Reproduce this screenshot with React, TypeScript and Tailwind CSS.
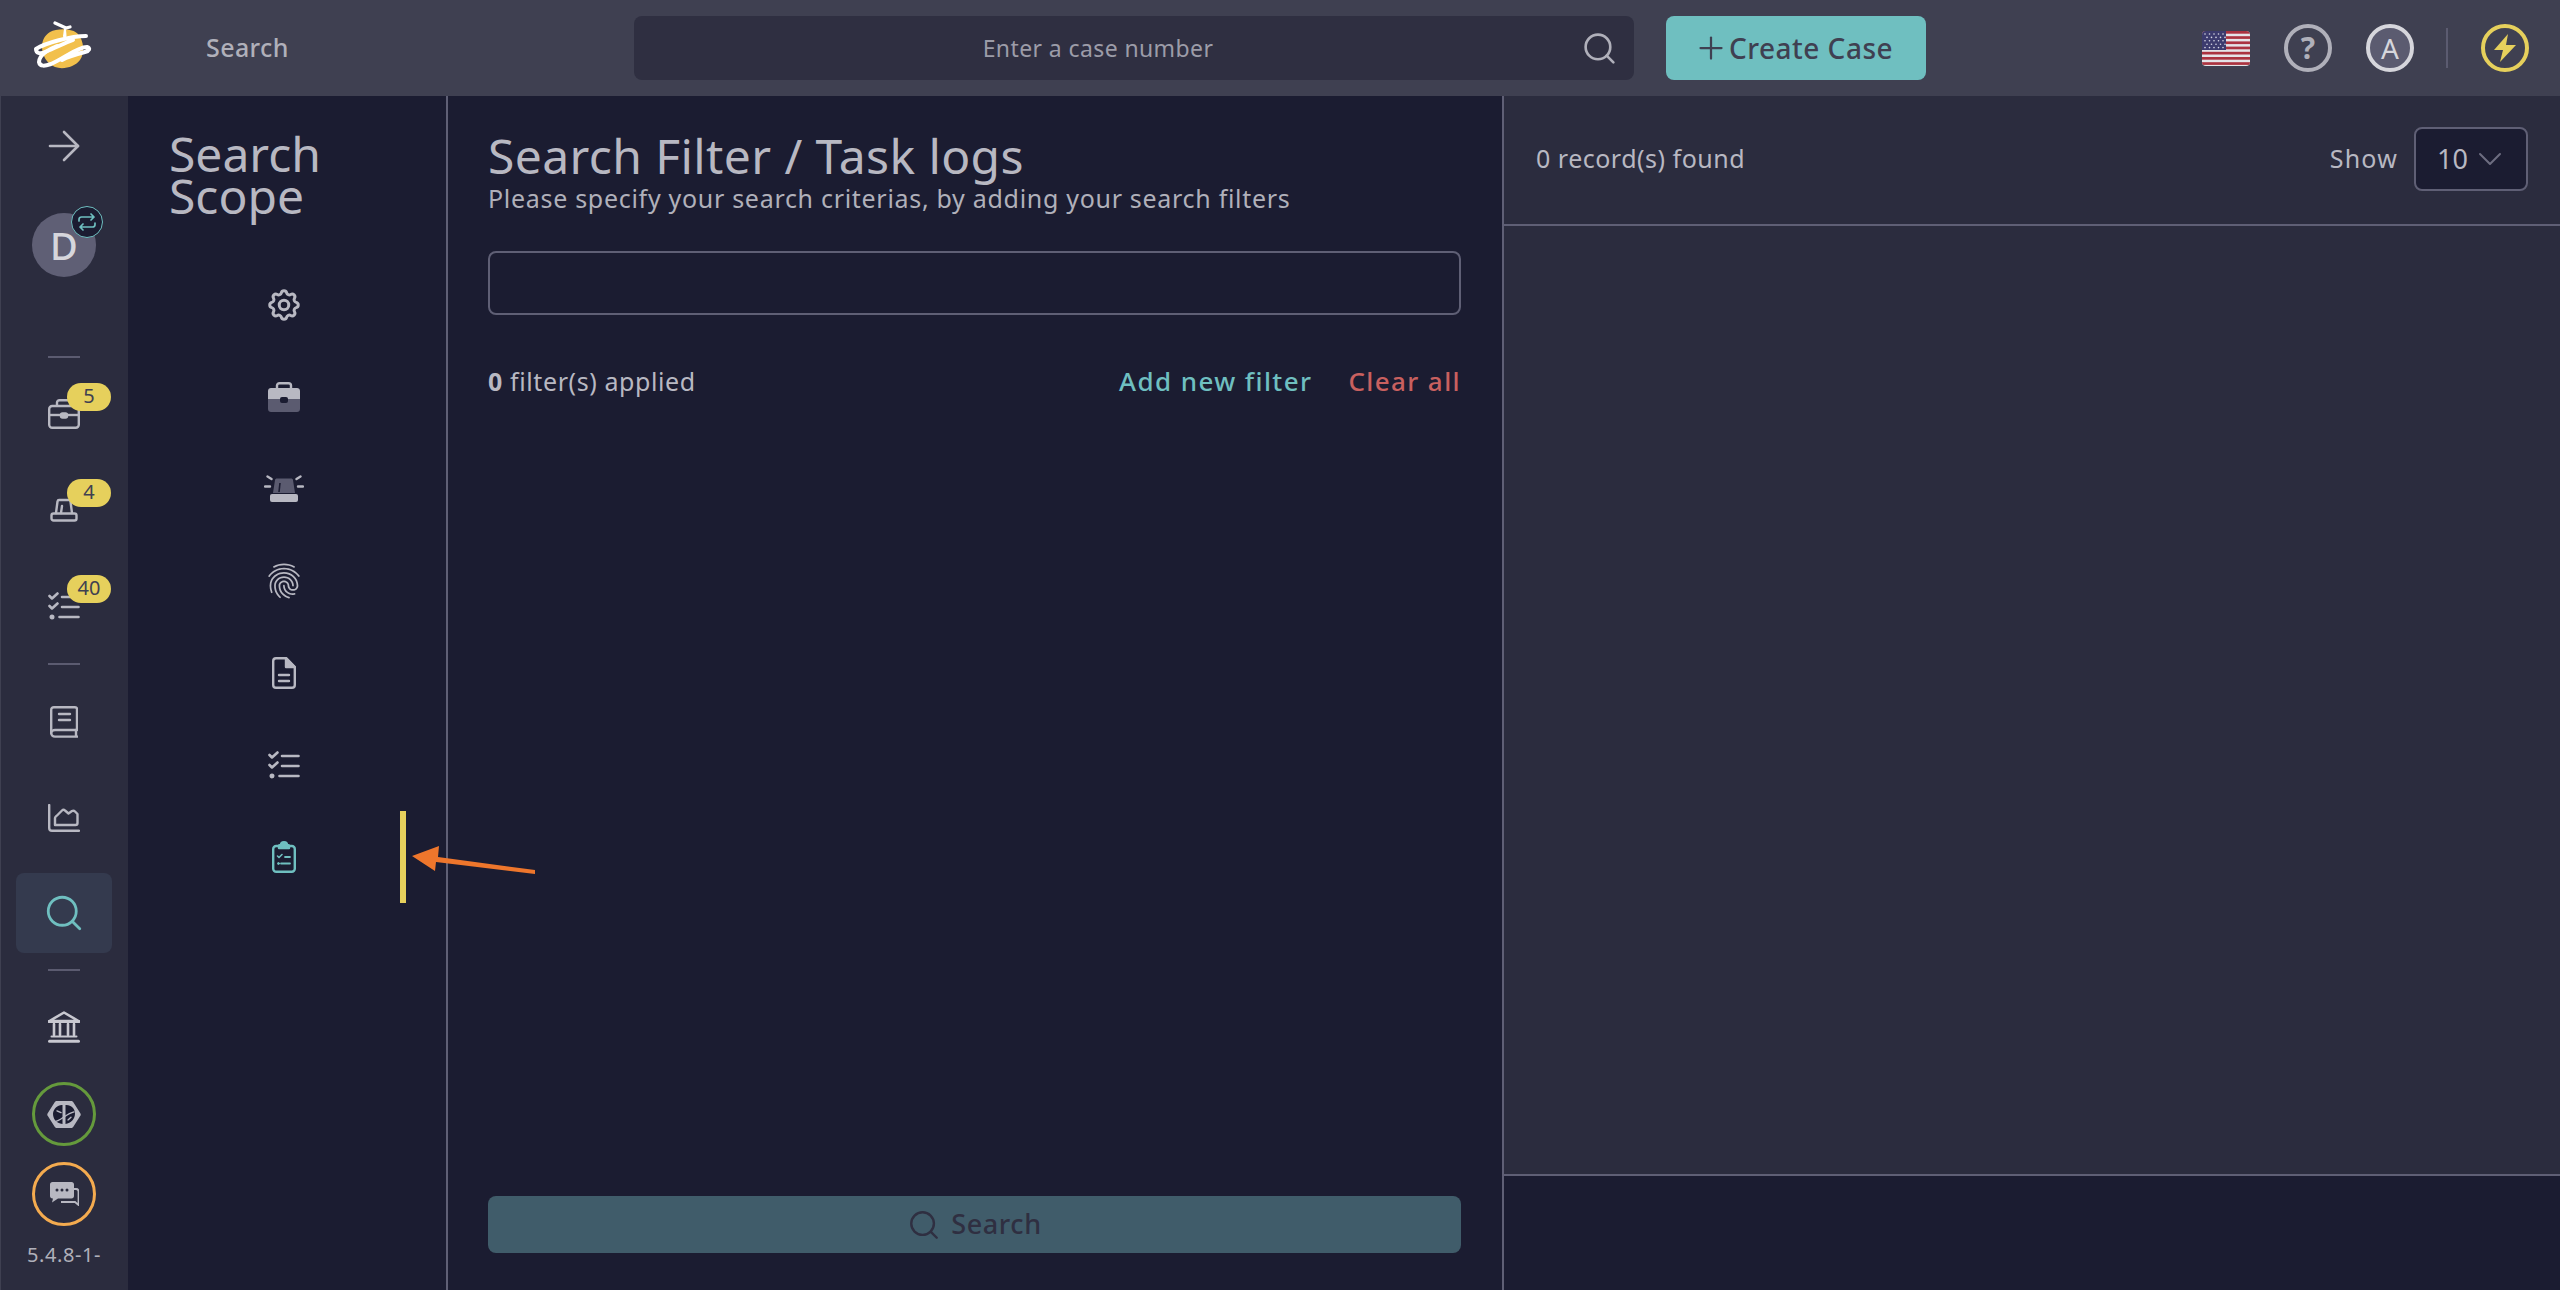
import React from 'react';
import { ArrowRight, ChevronDown, Plus, Search } from 'lucide-react';
import { MdFingerprint } from 'react-icons/md';
import { TbSettings } from 'react-icons/tb';

function Logo() {
    return (
        <svg width="60" height="54" viewBox="0 0 60 54" fill="none">
            <path d="M17 11C24 7 40 7 45 13C51 20 52 32 47 39C42 46 30 49 22 46C14 43 9 34 9 26C9 19 12 14 17 11Z" fill="#f2c04c" />
            <g stroke="#fff" strokeWidth="4" strokeLinecap="round" strokeLinejoin="round">
                <path d="M53 15C38 15 12 22 3 28C3 33 8 33 12 31C24 26 32 22 40 19" />
                <path d="M24 25C16 28 6 34 6 41C7 46 12 45 18 43C30 38 44 26 54 26C58 27 56 30 52 31C44 33 36 35 29 39" />
            </g>
            <path d="M22 2L33 7M37 6L33 7" stroke="#fff" strokeWidth="3.2" strokeLinecap="round" />
            <path d="M31 8L30 15C30.5 18 33 18 33.5 15L33 8Z" fill="#fff" />
        </svg>
    );
}

function UsFlag() {
    const stripes = [0, 1, 2, 3, 4, 5, 6];
    const stars = [];
    for (let r = 0; r < 5; r++) {
        for (let c = 0; c < 5; c++) stars.push(<circle key={`${r}-${c}`} cx={3 + c * 4.5 + (r % 2) * 2} cy={3 + r * 3.4} r="0.8" fill="#d8d8e4" />);
    }
    return (
        <svg width="48" height="35" viewBox="0 0 48 35" className="rounded-[4px]">
            <rect width="48" height="35" fill="#e4e4e8" />
            {stripes.map((i) => (
                <rect key={i} y={i * 5.2} width="48" height="2.7" fill="#ab3340" />
            ))}
            <rect width="24" height="19" fill="#3c3b6e" />
            {stars}
        </svg>
    );
}

function SirenOutline() {
    return (
        <svg width="28" height="24" viewBox="0 0 28 24" fill="none" stroke="currentColor" strokeWidth="2.4" strokeLinejoin="round" strokeLinecap="round">
            <rect x="1.5" y="15.5" width="25" height="7" rx="2" />
            <path d="M6 15L7.5 3.5C7.7 2.5 8.3 2 9 2H19C20 2 20.3 2.5 20.5 3.5L22 15" />
            <path d="M11 15L12 8" />
        </svg>
    );
}

function SirenDuo() {
    return (
        <svg width="40" height="28" viewBox="0 0 40 28" fill="none">
            <path d="M9 18L11 5C11.2 4 12 3.5 13 3.5H27C28 3.5 28.8 4 29 5L31 18Z" fill="#5b5b70" />
            <path d="M15 17L16 8" stroke="#1b1c31" strokeWidth="1.6" />
            <rect x="6" y="19" width="28" height="8" rx="2" fill="#b8b8c2" />
            <path d="M1 11.5H6M34 11.5H39M3.5 1.5L7.5 4M36.5 1.5L32.5 4" stroke="#b8b8c2" strokeWidth="2.4" strokeLinecap="round" />
        </svg>
    );
}

function BriefcaseOutline() {
    return (
        <svg width="32" height="30" viewBox="0 0 32 30" fill="none" stroke="currentColor" strokeWidth="2.4" strokeLinejoin="round">
            <rect x="1.2" y="7" width="29.6" height="21.8" rx="3" />
            <path d="M9 7V3.5C9 2 10 1.2 11.5 1.2H20.5C22 1.2 23 2 23 3.5V7" />
            <path d="M1.2 16H30.8" />
            <rect x="13" y="14.5" width="6" height="4" rx="1.5" fill="currentColor" />
        </svg>
    );
}

function BriefcaseDuo() {
    return (
        <svg width="32" height="30" viewBox="0 0 32 30" fill="none">
            <path d="M9 7V3.5C9 2 10 1.2 11.5 1.2H20.5C22 1.2 23 2 23 3.5V7" stroke="#b8b8c2" strokeWidth="2.4" />
            <path d="M0 9C0 7.3 1.3 6 3 6H29C30.7 6 32 7.3 32 9V17H0Z" fill="#b8b8c2" />
            <path d="M0 17H32V27C32 28.7 30.7 30 29 30H3C1.3 30 0 28.7 0 27Z" fill="#5b5b70" />
            <rect x="12" y="15" width="8" height="6" rx="2" fill="#1b1c31" />
        </svg>
    );
}

function ChecklistIcon() {
    return (
        <svg width="32" height="28" viewBox="0 0 32 28" fill="none" stroke="currentColor" strokeWidth="2.6" strokeLinecap="round" strokeLinejoin="round">
            <path d="M1.5 4L4 6.5L9.5 1.5M1.5 14L4 16.5L9.5 11.5" />
            <path d="M14 5H30.5M14 15H30.5M11.5 25H30.5" />
            <circle cx="4" cy="25" r="1.2" fill="currentColor" />
        </svg>
    );
}

function BookIcon() {
    return (
        <svg width="28" height="32" viewBox="0 0 28 32" fill="none" stroke="currentColor" strokeWidth="2.4" strokeLinecap="round" strokeLinejoin="round">
            <path d="M27 24V3C27 2 26 1.2 25 1.2H4C2.3 1.2 1.2 2.3 1.2 4V27" />
            <path d="M27 24H5C2.8 24 1.2 25.2 1.2 27C1.2 29 2.8 30.6 5 30.6H27.5" />
            <path d="M26 24V30" />
            <path d="M9 8H20M9 14H20" />
        </svg>
    );
}

function ChartIcon() {
    return (
        <svg width="32" height="28" viewBox="0 0 32 28" fill="none" stroke="currentColor" strokeWidth="2.4" strokeLinecap="round" strokeLinejoin="round">
            <path d="M1.2 1V24C1.2 26 2 26.8 4 26.8H31" />
            <path d="M7 21V14C7 13 8 12.5 9 11.5L14 6.5C15 5.5 16 5.5 17 6.5L20.5 9.5L24 7C25 6.5 26 6.5 27 7.5L29.5 10V19C29.5 20.5 29 21 27.5 21Z" />
        </svg>
    );
}

function BankIcon() {
    return (
        <svg width="32" height="32" viewBox="0 0 32 32" fill="none" stroke="currentColor" strokeLinecap="round" strokeLinejoin="round">
            <path d="M1.5 10L16 1.5L30.5 10Z" strokeWidth="2.6" fill="none" />
            <path d="M1 10.5H31" strokeWidth="3" />
            <path d="M6 13V24M12 13V24M20 13V24M26 13V24" strokeWidth="2.6" />
            <path d="M3.5 25.5H28.5" strokeWidth="2" />
            <path d="M1.5 30.2H30.5" strokeWidth="3" />
        </svg>
    );
}

function FileIcon() {
    return (
        <svg width="24" height="32" viewBox="0 0 24 32" fill="none" stroke="currentColor" strokeWidth="2.4" strokeLinecap="round" strokeLinejoin="round">
            <path d="M14 1.2H4C2.2 1.2 1.2 2.2 1.2 4V28C1.2 29.8 2.2 30.8 4 30.8H20C21.8 30.8 22.8 29.8 22.8 28V10Z" />
            <path d="M14 1.2V10H22.8Z" fill="currentColor" />
            <path d="M7 18H17M7 24H17" />
        </svg>
    );
}

function ClipboardIcon() {
    return (
        <svg width="24" height="32" viewBox="0 0 24 32" fill="none" stroke="currentColor" strokeWidth="2.4" strokeLinecap="round" strokeLinejoin="round">
            <rect x="1.2" y="5" width="21.6" height="25.8" rx="3" />
            <path d="M7 5C7 4 8 4 9 4C9 2 10 1.2 12 1.2C14 1.2 15 2 15 4C16 4 17 4 17 5V7H7Z" fill="currentColor" />
            <path d="M5.5 15L7 16.5L10 13.5" strokeWidth="1.6" />
            <path d="M13 16H18M9 22.5H18" strokeWidth="1.8" />
            <circle cx="6.5" cy="22.5" r="1" fill="currentColor" strokeWidth="1" />
        </svg>
    );
}

function Brain() {
    return (
        <svg width="34" height="29" viewBox="0 0 34 32" fill="none" preserveAspectRatio="none">
            <path d="M10 1H24C25 1 25.5 1.5 26 2L33 14C34 15.5 34 16.5 33 18L26 30C25.5 30.5 25 31 24 31H10C9 31 8.5 30.5 8 30L1 18C0 16.5 0 15.5 1 14L8 2C8.5 1.5 9 1 10 1Z" fill="#b8b8c2" />
            <path d="M15.5 5.5C11 5 6.5 9 6 15C6 21 9 26 15.5 26.5Z M18.5 5.5C24 5 28 9 28 15C28 21 24 26 18.5 26.5Z" fill="#1b1c31" />
            <path d="M7 24C13 24 19 15 27 13M17 5V11M10 12L14 14M24 19L21 22" stroke="#b8b8c2" strokeWidth="1.4" strokeLinecap="round" />
        </svg>
    );
}

function Chat() {
    return (
        <svg width="29" height="24" viewBox="0 0 29 24" fill="none">
            <path d="M24 7H26C27.5 7 28.5 8 28.5 9.5V23L25 20H11" stroke="#b8b8c2" strokeWidth="1.8" />
            <path d="M2.5 0H21.5C23 0 24 1 24 2.5V14C24 15.5 23 16.5 21.5 16.5H8L2 20.5L3 16.5H2.5C1 16.5 0 15.5 0 14V2.5C0 1 1 0 2.5 0Z" fill="#b8b8c2" />
            <circle cx="7" cy="8" r="1.5" fill="#2b2c3e" />
            <circle cx="12" cy="8" r="1.5" fill="#2b2c3e" />
            <circle cx="17" cy="8" r="1.5" fill="#2b2c3e" />
        </svg>
    );
}

function SideRow({ children, badge }: { children: React.ReactNode; badge?: string }) {
    return (
        <div className="relative h-[96px] w-full flex items-center justify-center text-[#b8b8c2]">
            {children}
            {badge && (
                <span className="absolute left-[66px] top-[17px] w-[44px] h-[28px] rounded-full bg-[#e6d05c] text-[#3f4051] text-[20px] leading-[26px] text-center">{badge}</span>
            )}
        </div>
    );
}

function SideDivider() {
    return <div className="w-[32px] h-[2px] bg-[#5b5b70]" />;
}

export default function App() {
    return (
        <div className="relative w-[2560px] h-[1290px] overflow-hidden bg-[#1b1c31] text-[#b8b8c2] font-['Noto_Sans',sans-serif]">
            {/* Top bar */}
            <header className="h-[96px] bg-[#3f4051] flex items-center pl-[33px]">
                <Logo />
                <span className="ml-[113px] w-[428px] text-[25px] font-medium tracking-[0.4px] text-[#b0b0ba]">Search</span>
                <div className="w-[1000px] h-[64px] rounded-[8px] bg-[#2f2f41] flex items-center pr-[16px]">
                    <span className="flex-1 mr-[19px] text-center text-[23px] tracking-[0.4px] text-[#9c9ca8]">Enter a case number</span>
                    <Search className="w-[37px] h-[37px] text-[#b0b0ba]" strokeWidth={1.7} />
                </div>
                <button className="ml-[32px] w-[260px] h-[64px] rounded-[8px] bg-[#6fbfc0] text-[#3f4051] flex items-center justify-center gap-[0px] text-[28px] font-medium tracking-[0.5px]">
                    <Plus className="w-[36px] h-[36px] -ml-[6px]" strokeWidth={1.5} />
                    Create Case
                </button>
                <div className="ml-[276px]"><UsFlag /></div>
                <div className="ml-[34px] w-[48px] h-[48px] rounded-full border-[4px] border-[#b0b0ba] flex items-center justify-center text-[30px] font-bold leading-none text-[#b0b0ba]">?</div>
                <div className="ml-[34px] w-[48px] h-[48px] rounded-full border-[4px] border-[#d6d6dc] bg-[#5b5b70] flex items-center justify-center text-[28px] leading-none text-[#d6d6dc]">A</div>
                <div className="ml-[32px] w-[2px] h-[40px] bg-[#5b5b70]" />
                <div className="ml-[33px] w-[48px] h-[48px] rounded-full border-[4px] border-[#e6d05c] flex items-center justify-center">
                    <svg width="24" height="28" viewBox="0 0 24 28"><path d="M15 0L1 16H10L7 28L23 11H13Z" fill="#e6d05c" /></svg>
                </div>
            </header>

            <div className="flex h-[1194px]">
                {/* Icon rail */}
                <aside className="w-[128px] bg-[#2b2c3e] border-l border-[#3f4051] flex flex-col items-center pt-[26px] pr-[1px]">
                    <ArrowRight className="w-[48px] h-[48px] text-[#b8b8c2] shrink-0" strokeWidth={1.3} />
                    <div className="relative mt-[43px] w-[64px] h-[64px] rounded-full bg-[#5f5f75] flex items-center justify-center text-[38px] font-medium text-[#d6d6dc] shrink-0">
                        D
                        <span className="absolute left-[39px] -top-[7px] w-[32px] h-[32px] rounded-full border border-[#6fbfc0] bg-[#1b1c31] flex items-center justify-center">
                            <svg width="20" height="20" viewBox="0 0 20 20" fill="none" stroke="#6fbfc0" strokeWidth="1.7" strokeLinecap="round" strokeLinejoin="round">
                                <path d="M2 9V7.5C2 6 3 5 4.5 5H17M14 2L17 5L14 8M18 11V12.5C18 14 17 15 15.5 15H3M6 12L3 15L6 18" />
                            </svg>
                        </span>
                    </div>
                    <div className="mt-[79px] shrink-0"><SideDivider /></div>
                    <div className="w-full mt-[8px]">
                        <SideRow badge="5"><BriefcaseOutline /></SideRow>
                        <SideRow badge="4"><SirenOutline /></SideRow>
                        <SideRow badge="40"><ChecklistIcon /></SideRow>
                    </div>
                    <div className="mt-[9px]"><SideDivider /></div>
                    <div className="w-full mt-[9px]">
                        <SideRow><BookIcon /></SideRow>
                        <SideRow><ChartIcon /></SideRow>
                    </div>
                    <div className="mt-[7px] w-[96px] h-[80px] rounded-[8px] bg-[#343a4e] flex items-center justify-center shrink-0">
                        <Search className="w-[42px] h-[42px] text-[#6fbfc0]" strokeWidth={1.6} />
                    </div>
                    <div className="mt-[16px]"><SideDivider /></div>
                    <div className="mt-[40px] text-[#c8c8d0]"><BankIcon /></div>
                    <div className="mt-[39px] w-[64px] h-[64px] rounded-full border-[3px] border-[#659a3c] flex items-center justify-center shrink-0"><Brain /></div>
                    <div className="mt-[16px] w-[64px] h-[64px] rounded-full border-[3px] border-[#f4ab4f] flex items-center justify-center shrink-0"><Chat /></div>
                    <span className="mt-[15px] text-[20px] tracking-[0.6px] leading-[28px] text-[#b0b0ba]">5.4.8-1-</span>
                </aside>

                {/* Search scope */}
                <section className="relative w-[320px] border-r-2 border-[#5f5f75] pt-[37px]">
                    <h2 className="pl-[41px] text-[48px] leading-[42px] text-[#b8b8c2]">Search<br />Scope</h2>
                    <div className="mt-[42px] flex flex-col items-center w-[312px] text-[#b8b8c2]">
                        <div className="h-[92px] flex items-center"><TbSettings size={38} strokeWidth={1.9} /></div>
                        <div className="h-[92px] flex items-center"><BriefcaseDuo /></div>
                        <div className="h-[92px] flex items-center"><SirenDuo /></div>
                        <div className="h-[92px] flex items-center"><MdFingerprint size={42} /></div>
                        <div className="h-[92px] flex items-center"><FileIcon /></div>
                        <div className="h-[92px] flex items-center"><ChecklistIcon /></div>
                        <div className="h-[92px] flex items-center text-[#6fbfc0]"><ClipboardIcon /></div>
                    </div>
                    <div className="absolute left-[272px] top-[715px] w-[6px] h-[92px] bg-[#e6d05c]" />
                </section>

                {/* Filters */}
                <main className="w-[1056px] border-r-2 border-[#5f5f75] pl-[40px] pr-[41px] flex flex-col">
                    <h1 className="mt-[32px] text-[48px] tracking-[0.4px] leading-[56px] text-[#b8b8c2]">Search Filter / Task logs</h1>
                    <p className="text-[25px] tracking-[0.7px] leading-[28px] text-[#b0b0ba]">Please specify your search criterias, by adding your search filters</p>
                    <div className="mt-[39px] h-[64px] rounded-[8px] border-2 border-[#5f5f75]" />
                    <div className="mt-[48px] flex items-center justify-between text-[25px] tracking-[0.6px] leading-[36px]">
                        <span><b className="font-bold">0</b> filter(s) applied</span>
                        <span className="flex gap-[36px] font-medium text-[26px] tracking-[1.4px]">
                            <span className="text-[#6fbfc0]">Add new filter</span>
                            <span className="text-[#c9605f]">Clear all</span>
                        </span>
                    </div>
                    <div className="flex-1" />
                    <button className="mb-[37px] h-[57px] rounded-[8px] bg-[#405c6a] text-[#2f2f41] flex items-center justify-center gap-[10px] text-[27px] font-medium tracking-[0.6px]">
                        <Search className="w-[34px] h-[34px]" strokeWidth={1.7} />
                        Search
                    </button>
                </main>

                {/* Results */}
                <section className="flex-1 flex flex-col">
                    <div className="h-[130px] bg-[#2b2c3e] border-b-2 border-[#5f5f75] flex items-center pl-[32px] pr-[32px] pb-[2px]">
                        <span className="flex-1 text-[25px] tracking-[0.5px]">0 record(s) found</span>
                        <span className="text-[25px] tracking-[1.2px] mr-[16px]">Show</span>
                        <div className="w-[114px] h-[64px] rounded-[8px] border-2 border-[#5f5f75] bg-[#1b1c31] flex items-center pl-[21px] text-[27px]">
                            10
                            <ChevronDown className="ml-[2px] w-[40px] h-[40px] text-[#6d6d80]" strokeWidth={1.2} />
                        </div>
                    </div>
                    <div className="flex-1 bg-[#2b2c3e]" />
                    <div className="h-[116px] border-t-2 border-[#5f5f75] bg-[#1b1c31]" />
                </section>
            </div>

            {/* Annotation arrow */}
            <svg className="absolute left-[405px] top-[840px]" width="140" height="40" viewBox="0 0 140 40">
                <path d="M7 16L34 6L33 17L130 30L130 34L31 22L30 31Z" fill="#ee762c" />
            </svg>
        </div>
    );
}
